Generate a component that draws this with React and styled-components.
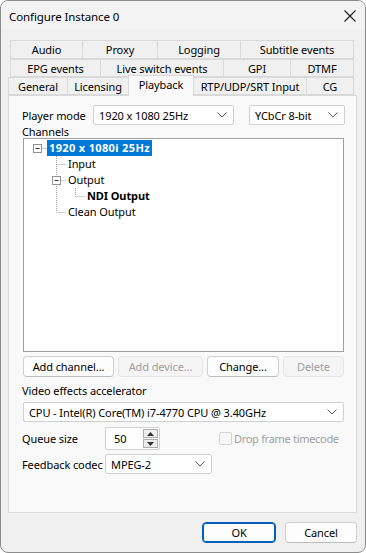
import { createGlobalStyle } from "styled-components";
import styled from "styled-components";

const FONT = `"Noto Sans", "Open Sans", sans-serif`;

const GlobalStyle = createGlobalStyle`
  html, body {
    margin: 0;
    padding: 0;
    background: #ffffff;
  }
  * { box-sizing: border-box; }
`;

const Window = styled.div`
  width: 366px;
  height: 553px;
  background: #f0f0f0;
  border: 1px solid #8c8c8c;
  border-radius: 8px;
  font-family: ${FONT};
  font-size: 11px;
  letter-spacing: -0.1px;
  color: #000;
  display: flex;
  flex-direction: column;
  overflow: hidden;
`;

const TitleBar = styled.div`
  height: 29px;
  display: flex;
  align-items: center;
  justify-content: space-between;
  padding: 0 7px 0 8px;
  background: #f3f3f3;
`;

const TitleText = styled.div`
  font-size: 11.5px;
  padding-top: 1px;
`;

const CloseButton = styled.div`
  width: 16px;
  height: 16px;
  display: flex;
  align-items: center;
  justify-content: center;
`;

const Body = styled.div`
  flex: 1;
  display: flex;
  flex-direction: column;
  padding: 10px 8px 0 7px;
`;

const TabRow = styled.div`
  display: flex;
  height: ${p => p.h}px;
  padding-left: ${p => p.indent}px;
  align-items: flex-end;
`;

const Tab = styled.div`
  width: ${p => p.w}px;
  height: ${p => (p.active ? p.h + 3 : p.h)}px;
  display: flex;
  align-items: center;
  justify-content: center;
  background: ${p => (p.active ? "#f9f9f9" : "#f0f0f0")};
  border: 1px solid #d9d9d9;
  border-left: ${p => (p.first || p.active ? "1px solid #d9d9d9" : "none")};
  border-bottom: ${p => (p.active ? "none" : "1px solid #d9d9d9")};
  padding-bottom: ${p => (p.active ? 3 : 0)}px;
  margin-bottom: ${p => (p.active ? -1 : 0)}px;
  margin-left: ${p => (p.active ? -1 : 0)}px;
  position: relative;
  z-index: ${p => (p.active ? 2 : 1)};
  white-space: nowrap;
`;

const Panel = styled.div`
  height: 418px;
  background: #f9f9f9;
  border: 1px solid #d9d9d9;
  padding: 9px 12px 0 13px;
  display: flex;
  flex-direction: column;
`;

const FieldRow = styled.div`
  display: flex;
  align-items: center;
  height: ${p => p.h || 20}px;
  margin-top: ${p => p.mt || 0}px;
  margin-left: ${p => p.ml || 0}px;
`;

const Label = styled.div`
  width: ${p => (p.w ? `${p.w}px` : "auto")};
  flex-shrink: 0;
  white-space: nowrap;
  color: ${p => (p.disabled ? "#a0a0a0" : "#000")};
  letter-spacing: ${p => (p.disabled ? "-0.3px" : "inherit")};
`;

const Combo = styled.div`
  width: ${p => (p.w ? `${p.w}px` : "auto")};
  flex: ${p => (p.w ? "none" : 1)};
  height: 20px;
  margin-left: ${p => p.ml || 0}px;
  background: #ffffff;
  border: 1px solid #d0d0d0;
  border-radius: 2px;
  display: flex;
  align-items: center;
  justify-content: space-between;
  padding: 0 6px 0 5px;
  white-space: nowrap;
`;

const SectionLabel = styled.div`
  height: ${p => p.h}px;
  display: flex;
  align-items: center;
  margin-top: ${p => p.mt || 0}px;
`;

const TreeBox = styled.div`
  height: 214px;
  margin-left: 1px;
  background: #ffffff;
  border: 1px solid #a0a0a0;
  padding: 1px 0;
`;

const TreeRow = styled.div`
  display: flex;
  height: 16px;
  align-items: center;
`;

const TreeLabel = styled.span`
  padding: 0 2px;
  height: 16px;
  line-height: 16px;
  font-weight: ${p => (p.bold ? 700 : 400)};
  letter-spacing: ${p => (p.selected ? "0.35px" : "inherit")};
  background: ${p => (p.selected ? "#0078d7" : "transparent")};
  color: ${p => (p.selected ? "#ffffff" : "#000")};
  white-space: nowrap;
`;

const ButtonRow = styled.div`
  display: flex;
  gap: 4px;
  margin-top: 4px;
  margin-left: 1px;
`;

const Button = styled.div`
  width: ${p => p.w}px;
  height: 21px;
  flex-shrink: 0;
  display: flex;
  align-items: center;
  justify-content: center;
  background: ${p => (p.disabled ? "#f5f5f5" : "#fdfdfd")};
  border: 1px solid ${p => (p.disabled ? "#e5e5e5" : p.primary ? "#005fb8" : "#d0d0d0")};
  box-shadow: ${p => (p.primary ? "inset 0 0 0 1px #005fb8" : "none")};
  border-bottom-color: ${p => (p.disabled ? "#e5e5e5" : p.primary ? "#005fb8" : "#bdbdbd")};
  border-radius: 4px;
  color: ${p => (p.disabled ? "#a0a0a0" : "#000")};
  white-space: nowrap;
`;

const SpinBox = styled.div`
  width: 55px;
  height: 23px;
  flex-shrink: 0;
  display: flex;
  background: #ffffff;
  border: 1px solid #d0d0d0;
  border-radius: 2px;
  padding: 1px;
`;

const SpinValue = styled.div`
  flex: 1;
  display: flex;
  align-items: center;
  padding-left: 7px;
`;

const SpinButtons = styled.div`
  width: 15px;
  display: flex;
  flex-direction: column;
  gap: 1px;
`;

const SpinButton = styled.div`
  flex: 1;
  border: 1px solid #adadad;
  background: #efefef;
  display: flex;
  align-items: center;
  justify-content: center;
`;

const CheckArea = styled.div`
  display: flex;
  align-items: center;
  margin-left: 59px;
  gap: 2px;
`;

const CheckBox = styled.div`
  width: 13px;
  height: 13px;
  border: 1px solid #d5d5d5;
  border-radius: 2px;
  background: #f7f7f7;
`;

const Footer = styled.div`
  display: flex;
  justify-content: flex-end;
  gap: 9px;
  padding: 9px 0 0;
`;

const Chevron = () => (
  <svg width="10" height="6" viewBox="0 0 10 6">
    <path d="M0.5 0.5 L5 5 L9.5 0.5" fill="none" stroke="#5a5a5a" strokeWidth="1" />
  </svg>
);

const CloseIcon = () => (
  <svg width="12" height="12" viewBox="0 0 12 12">
    <path d="M0.5 0.5 L11.5 11.5 M11.5 0.5 L0.5 11.5" stroke="#1a1a1a" strokeWidth="1.1" />
  </svg>
);

const Triangle = ({ up }) => (
  <svg width="7" height="4" viewBox="0 0 7 4">
    <path d={up ? "M0 4 L3.5 0 L7 4 Z" : "M0 0 L3.5 4 L7 0 Z"} fill="#333" />
  </svg>
);

// tree gutter: columns are 19px apart, first column centre 13px in
const COL = i => 13.5 + 19 * i;

const TreeGutter = ({ level, guides, last, box, isRoot }) => {
  const width = 23 + 19 * level;
  const c = COL(level);
  const dot = { stroke: "#a0a0a0", strokeWidth: 1, strokeDasharray: "1 1", fill: "none" };
  return (
    <svg width={width} height="16" viewBox={`0 0 ${width} 16`} style={{ flexShrink: 0 }}>
      {guides.map(g => (
        <line key={g} x1={COL(g)} y1="0" x2={COL(g)} y2="16" {...dot} />
      ))}
      {!isRoot && <line x1={c} y1="0" x2={c} y2={last ? 8 : 16} {...dot} />}
      <line x1={c} y1="8.5" x2={width} y2="8.5" {...dot} />
      {box && (
        <g>
          <rect x={c - 4} y="4.5" width="8" height="8" fill="#fff" stroke="#919191" />
          <line x1={c - 2} y1="8.5" x2={c + 2} y2="8.5" stroke="#333" />
        </g>
      )}
    </svg>
  );
};

const tabRows = [
  {
    h: 19,
    indent: 2,
    tabs: [
      ["Audio", 73],
      ["Proxy", 75],
      ["Logging", 83],
      ["Subtitle events", 113],
    ],
  },
  {
    h: 18,
    indent: 2,
    tabs: [
      ["EPG events", 91],
      ["Live switch events", 123],
      ["GPI", 67],
      ["DTMF", 63],
    ],
  },
  {
    h: 18,
    indent: 0,
    tabs: [
      ["General", 60],
      ["Licensing", 61],
      ["Playback", 66],
      ["RTP/UDP/SRT Input", 113],
      ["CG", 47],
    ],
  },
];

const treeItems = [
  { text: "1920 x 1080i 25Hz", level: 0, guides: [], box: true, isRoot: true, bold: true, selected: true },
  { text: "Input", level: 1, guides: [] },
  { text: "Output", level: 1, guides: [], box: true },
  { text: "NDI Output", level: 2, guides: [1], last: true, bold: true },
  { text: "Clean Output", level: 1, guides: [], last: true },
];

export default function App() {
  return (
    <>
      <GlobalStyle />
      <Window>
        <TitleBar>
          <TitleText>Configure Instance 0</TitleText>
          <CloseButton>
            <CloseIcon />
          </CloseButton>
        </TitleBar>
        <Body>
          {tabRows.map((row, r) => (
            <TabRow key={r} h={row.h} indent={row.indent}>
              {row.tabs.map(([name, w], i) => (
                <Tab key={name} w={w} h={row.h} first={i === 0} active={name === "Playback"}>
                  {name}
                </Tab>
              ))}
            </TabRow>
          ))}
          <Panel>
            <FieldRow>
              <Label w={71}>Player mode</Label>
              <Combo w={141}>
                <span>1920 x 1080 25Hz</span>
                <Chevron />
              </Combo>
              <Combo w={96} ml={15}>
                <span>YCbCr 8-bit</span>
                <Chevron />
              </Combo>
            </FieldRow>
            <SectionLabel h={13}>Channels</SectionLabel>
            <TreeBox>
              {treeItems.map(item => (
                <TreeRow key={item.text}>
                  <TreeGutter {...item} />
                  <TreeLabel bold={item.bold} selected={item.selected}>
                    {item.text}
                  </TreeLabel>
                </TreeRow>
              ))}
            </TreeBox>
            <ButtonRow>
              <Button w={91}>Add channel...</Button>
              <Button w={85} disabled>
                Add device...
              </Button>
              <Button w={72}>Change...</Button>
              <Button w={61} disabled>
                Delete
              </Button>
            </ButtonRow>
            <SectionLabel h={24} mt={1}>Video effects accelerator</SectionLabel>
            <FieldRow ml={1}>
              <Combo>
                <span>CPU - Intel(R) Core(TM) i7-4770 CPU @ 3.40GHz</span>
                <Chevron />
              </Combo>
            </FieldRow>
            <FieldRow h={23} mt={5}>
              <Label w={83}>Queue size</Label>
              <SpinBox>
                <SpinValue>50</SpinValue>
                <SpinButtons>
                  <SpinButton>
                    <Triangle up />
                  </SpinButton>
                  <SpinButton>
                    <Triangle />
                  </SpinButton>
                </SpinButtons>
              </SpinBox>
              <CheckArea>
                <CheckBox />
                <Label disabled>Drop frame timecode</Label>
              </CheckArea>
            </FieldRow>
            <FieldRow mt={4}>
              <Label w={83}>Feedback codec</Label>
              <Combo w={107}>
                <span>MPEG-2</span>
                <Chevron />
              </Combo>
            </FieldRow>
          </Panel>
          <Footer>
            <Button w={74} primary>
              OK
            </Button>
            <Button w={72}>Cancel</Button>
          </Footer>
        </Body>
      </Window>
    </>
  );
}
